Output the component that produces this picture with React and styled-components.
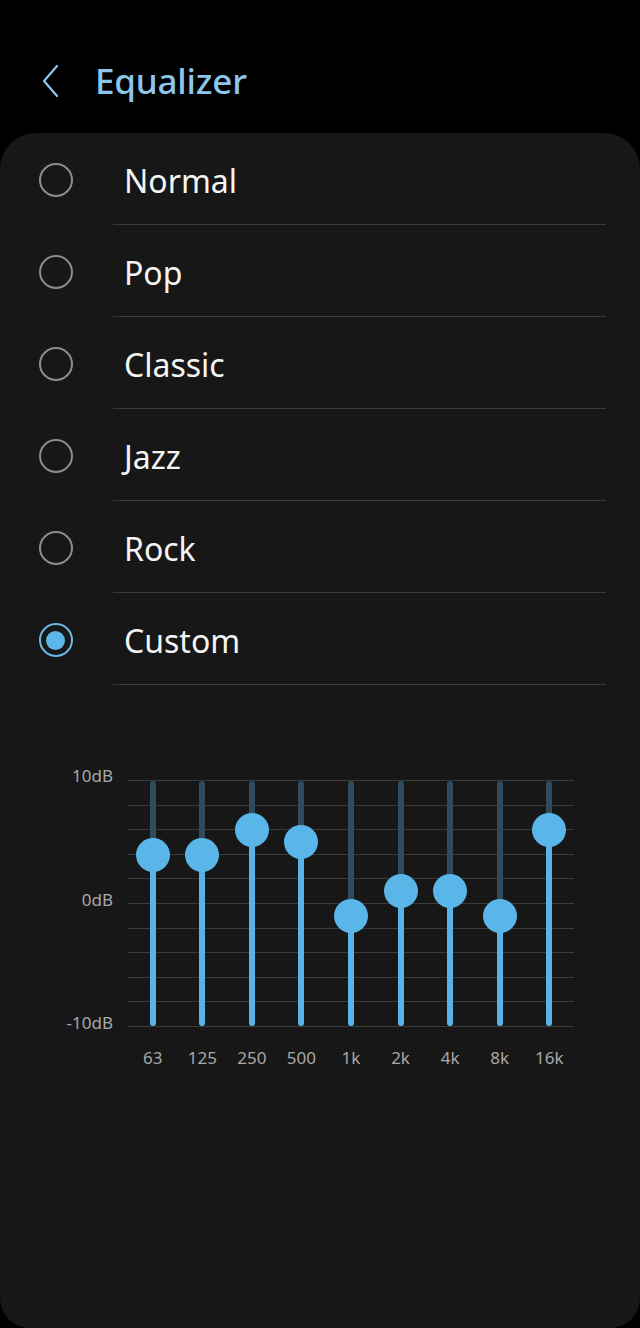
import React from "react";
import styled, { createGlobalStyle } from "styled-components";

const Global = createGlobalStyle`
  html, body { margin: 0; padding: 0; background: #000; }
  body { font-family: "Noto Sans", Roboto, sans-serif; -webkit-font-smoothing: antialiased; }
`;

const Page = styled.div`
  width: 640px;
  height: 1328px;
  background: #000;
  display: flex;
  flex-direction: column;
  overflow: hidden;
`;

const Header = styled.header`
  height: 133px;
  display: flex;
  align-items: flex-start;
  padding-top: 59px;
  box-sizing: border-box;
`;

const BackButton = styled.button`
  width: 55px;
  height: 44px;
  margin-left: 40px;
  padding: 0;
  background: none;
  border: 0;
  display: flex;
  align-items: center;
`;

const Title = styled.h1`
  margin: 0;
  font-size: 35px;
  font-weight: 500;
  color: #8cc6ea;
  line-height: 44px;
  letter-spacing: -0.2px;
`;

const Card = styled.main`
  flex: 1;
  background: #171717;
  border-radius: 36px 36px 30px 30px;
  display: flex;
  flex-direction: column;
  padding-right: 34px;
`;

const Row = styled.div`
  display: flex;
  height: 92px;
`;

const RadioCell = styled.div`
  width: 113px;
  display: flex;
  align-items: center;
  justify-content: center;
  box-sizing: border-box;
`;

const Radio = styled.span`
  width: 34px;
  height: 34px;
  box-sizing: border-box;
  border-radius: 50%;
  border: 2px solid ${(p) => (p.$checked ? "#6ab8e2" : "#8c8c8c")};
  display: flex;
  align-items: center;
  justify-content: center;
  margin-left: -2px;
  margin-top: 2px;
  &::after {
    content: "";
    display: ${(p) => (p.$checked ? "block" : "none")};
    width: 19px;
    height: 19px;
    border-radius: 50%;
    background: #5cb6e8;
  }
`;

const Label = styled.div`
  flex: 1;
  display: flex;
  align-items: center;
  padding-left: 11px;
  padding-top: 3px;
  border-bottom: 1px solid #3a3a3a;
  font-size: 32px;
  color: #f4f4f4;
`;

const Chart = styled.section`
  margin-top: 95px;
  display: grid;
  grid-template-columns: 113px 446px;
  column-gap: 15px;
  row-gap: 19px;
`;

const Axis = styled.div`
  display: flex;
  flex-direction: column;
  justify-content: space-between;
  align-items: flex-end;
  margin-top: -14px;
  margin-bottom: -6px;
  height: 267px;
`;

const AxisLabel = styled.span`
  font-size: 17px;
  line-height: 20px;
  color: #a8a8a8;
`;

const Plot = styled.div`
  position: relative;
  height: 247px;
`;

const Grid = styled.div`
  position: absolute;
  inset: 0;
  display: flex;
  flex-direction: column;
  justify-content: space-between;
`;

const GridLine = styled.div`
  height: 1px;
  background: #3b3b3b;
`;

const Bands = styled.div`
  position: relative;
  height: 100%;
  display: grid;
  grid-template-columns: repeat(9, 1fr);
`;

const Band = styled.div`
  display: flex;
  justify-content: center;
  padding: 1px 0;
`;

const Track = styled.div`
  position: relative;
  width: 6px;
  border-radius: 3px;
  background: #2f4b5d;
`;

const Fill = styled.div`
  position: absolute;
  left: 0;
  right: 0;
  bottom: 0;
  border-radius: 3px;
  background: #58b3e6;
`;

const Thumb = styled.div`
  position: absolute;
  left: 50%;
  width: 34px;
  height: 34px;
  margin-left: -17px;
  margin-top: -17px;
  border-radius: 50%;
  background: #5ab5e8;
`;

const Freqs = styled.div`
  grid-column: 2;
  display: grid;
  grid-template-columns: repeat(9, 1fr);
`;

const Freq = styled.span`
  text-align: center;
  font-size: 17px;
  color: #a8a8a8;
`;

const presets = ["Normal", "Pop", "Classic", "Jazz", "Rock", "Custom"];
const bands = [
  ["63", 4],
  ["125", 4],
  ["250", 6],
  ["500", 5],
  ["1k", -1],
  ["2k", 1],
  ["4k", 1],
  ["8k", -1],
  ["16k", 6],
];

export default function App() {
  return (
    <Page>
      <Global />
      <Header>
        <BackButton aria-label="Back">
          <svg width="20" height="34" viewBox="0 0 20 34" fill="none">
            <path d="M17 2 L4 17 L17 32" stroke="#8cc6ea" strokeWidth="2.2" strokeLinecap="round" strokeLinejoin="round" />
          </svg>
        </BackButton>
        <Title>Equalizer</Title>
      </Header>
      <Card>
        {presets.map((p) => (
          <Row key={p}>
            <RadioCell>
              <Radio $checked={p === "Custom"} />
            </RadioCell>
            <Label>{p}</Label>
          </Row>
        ))}
        <Chart>
          <Axis>
            <AxisLabel>10dB</AxisLabel>
            <AxisLabel>0dB</AxisLabel>
            <AxisLabel>-10dB</AxisLabel>
          </Axis>
          <Plot>
            <Grid>
              {Array.from({ length: 11 }).map((_, i) => (
                <GridLine key={i} />
              ))}
            </Grid>
            <Bands>
              {bands.map(([f, v]) => {
                const pct = ((v + 10) / 20) * 100;
                return (
                  <Band key={f}>
                    <Track>
                      <Fill style={{ height: `${pct}%` }} />
                      <Thumb style={{ top: `${100 - pct}%` }} />
                    </Track>
                  </Band>
                );
              })}
            </Bands>
          </Plot>
          <Freqs>
            {bands.map(([f]) => (
              <Freq key={f}>{f}</Freq>
            ))}
          </Freqs>
        </Chart>
      </Card>
    </Page>
  );
}
